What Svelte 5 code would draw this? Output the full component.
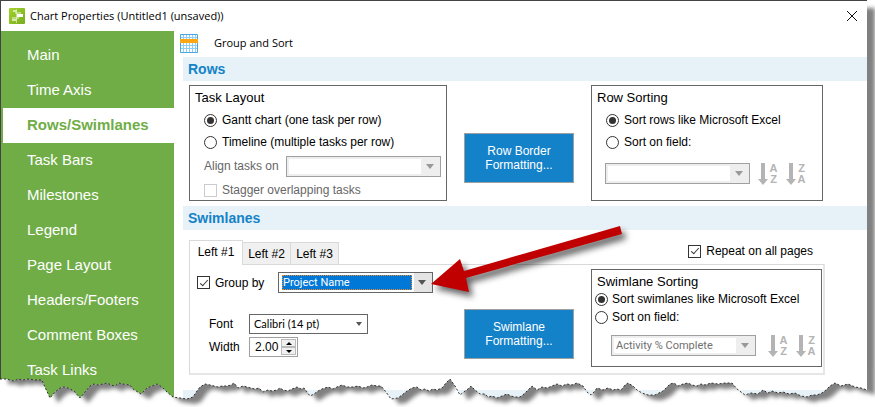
<script>
    const pages = ['Main', 'Time Axis', 'Rows/Swimlanes', 'Task Bars', 'Milestones', 'Legend', 'Page Layout', 'Headers/Footers', 'Comment Boxes', 'Task Links'];
    const tabs = ['Left #1', 'Left #2', 'Left #3'];

    let page = $state('Rows/Swimlanes');
    let tab = $state('Left #1');
    let taskLayout = $state('gantt');
    let rowSort = $state('excel');
    let laneSort = $state('excel');
    let groupBy = $state(true);
    let repeat = $state(true);
    let width = $state('2.00');

    // x,y points of the torn bottom edge
    const tear = [
        [0, 10], [7, 10], [10, 11], [14, 12], [18, 10], [23, 11], [28, 10], [35, 11], [42, 11], [44, 16], [50, 29], [55, 23], [60, 19], [64, 18],
        [68, 19], [74, 22], [80, 29], [85, 23], [90, 17], [94, 15], [98, 16], [103, 15], [107, 14], [111, 16], [115, 17], [119, 14], [122, 15], [130, 16],
        [133, 20], [141, 25], [147, 19], [152, 17], [157, 15], [162, 18], [167, 23], [173, 28], [180, 29], [187, 30], [193, 28], [197, 22], [200, 18],
        [205, 15], [210, 16], [214, 17], [218, 18], [222, 17], [227, 17], [231, 16], [234, 14], [238, 19], [243, 17], [247, 18], [251, 19], [255, 20],
        [259, 19], [263, 23], [268, 21], [272, 22], [277, 21], [280, 19], [283, 21], [288, 22], [292, 20], [297, 18], [301, 20], [304, 19], [307, 23],
        [310, 27], [314, 25], [318, 22], [322, 20], [328, 18], [333, 20], [337, 18], [342, 16], [347, 18], [353, 18], [358, 17], [363, 19], [367, 18],
        [372, 16], [377, 17], [381, 17], [386, 23], [391, 30], [398, 29], [402, 26], [407, 22], [412, 19], [417, 18], [421, 21], [425, 20], [429, 22],
        [433, 20], [437, 21], [442, 19], [446, 14], [450, 10], [455, 17], [460, 26], [465, 22], [468, 20], [471, 17], [475, 21], [480, 25], [485, 25],
        [488, 28], [492, 27], [497, 29], [502, 27], [507, 25], [511, 27], [515, 28], [520, 28], [524, 25], [527, 22], [532, 17], [537, 21], [542, 18],
        [547, 19], [552, 17], [557, 15], [562, 17], [567, 15], [572, 16], [577, 14], [583, 17], [587, 23], [591, 26], [594, 23], [597, 19], [603, 21],
        [608, 19], [613, 21], [617, 20], [621, 21], [625, 16], [628, 14], [633, 17], [637, 21], [642, 24], [648, 26], [655, 26], [659, 24], [663, 22],
        [667, 18], [670, 15], [674, 14], [678, 17], [683, 15], [688, 14], [692, 16], [697, 17], [701, 15], [705, 16], [711, 14], [718, 15], [725, 14],
        [732, 14], [737, 20], [741, 23], [745, 26], [751, 24], [758, 25], [763, 21], [768, 24], [772, 22], [778, 24], [783, 23], [789, 25], [795, 24],
        [801, 27], [807, 28], [812, 26], [817, 26], [822, 24], [826, 21], [830, 17], [835, 14], [841, 17], [848, 15], [855, 18], [861, 19], [867, 21]
    ].map((p) => p.join(',')).join(' ');
</script>

{#snippet sortIcon(first, second)}
    <span class="shaft">
        <svg width="10" height="22" viewBox="0 0 10 22" aria-hidden="true"><path d="M3 0h4v16h3l-5 6-5-6h3z" fill="#b4b4b4" /></svg>
    </span>
    <span class="letters"><b>{first}</b><b>{second}</b></span>
{/snippet}

<div class="window">
    <div class="dialog">
        <header class="titlebar">
            <svg width="16" height="16" viewBox="0 0 16 16" aria-hidden="true">
                <defs>
                    <linearGradient id="leaf" x1="0" y1="0" x2="1" y2="1">
                        <stop offset="0" stop-color="#a5d22d" />
                        <stop offset="1" stop-color="#76ad1c" />
                    </linearGradient>
                </defs>
                <rect width="16" height="16" rx="1" fill="url(#leaf)" />
                <path d="M7.500 1v14" stroke="#c3df8c" />
                <path d="M4 3h4M3 12h5" stroke="#d7ebb0" stroke-width="2" />
                <path d="M6 5h6M3 10h7" stroke="#eef7da" stroke-width="1" />
                <path d="M8 7.500h6" stroke="#fff" stroke-width="3" />
            </svg>
            <span class="title">Chart Properties (Untitled1 (unsaved))</span>
            <button class="close" aria-label="Close">
                <svg width="10" height="10" viewBox="0 0 10 10"><path d="M0 0l10 10M10 0L0 10" stroke="#111" /></svg>
            </button>
        </header>

        <div class="body">
            <nav class="sidebar">
                {#each pages as name}
                    <button class="page" class:active={page === name} onclick={() => (page = name)}>{name}</button>
                {/each}
            </nav>

            <main>
                <div class="toolbar">
                    <svg width="18" height="19" viewBox="0 0 18 19" aria-hidden="true">
                        <rect width="18" height="19" fill="#fff" />
                        <path d="M3.500 0v19M6.500 0v19M9.500 0v19M12.500 0v19M15.500 0v19M0 3.500h18M0 11.500h18M0 14.500h18" stroke="#8fcdf5" />
                        <path d="M.5 .5h17v18H.5z" fill="none" stroke="#4aa5e0" />
                        <rect y="5" width="18" height="4" fill="#ffa614" />
                    </svg>
                    <span>Group and Sort</span>
                </div>

                <h2>Rows</h2>
                <section class="columns rows">
                    <fieldset class="box task-layout">
                        <h3>Task Layout</h3>
                        <label class="option"><input type="radio" name="layout" value="gantt" bind:group={taskLayout} />Gantt chart (one task per row)</label>
                        <label class="option"><input type="radio" name="layout" value="timeline" bind:group={taskLayout} />Timeline (multiple tasks per row)</label>
                        <div class="line muted">
                            <label for="align">Align tasks on</label>
                            <span class="combo disabled"><select id="align" disabled><option></option></select></span>
                        </div>
                        <label class="option muted"><input type="checkbox" disabled />Stagger overlapping tasks</label>
                    </fieldset>

                    <button class="format">Row Border<br />Formatting...</button>

                    <fieldset class="box row-sorting">
                        <h3>Row Sorting</h3>
                        <label class="option"><input type="radio" name="rowsort" value="excel" bind:group={rowSort} />Sort rows like Microsoft Excel</label>
                        <label class="option"><input type="radio" name="rowsort" value="field" bind:group={rowSort} />Sort on field:</label>
                        <div class="line sort-line">
                            <span class="combo sort disabled"><select aria-label="Row sort field" disabled><option></option></select></span>
                            <button class="az" aria-label="Sort ascending" disabled>{@render sortIcon('A', 'Z')}</button>
                            <button class="az" aria-label="Sort descending" disabled>{@render sortIcon('Z', 'A')}</button>
                        </div>
                    </fieldset>
                </section>

                <h2>Swimlanes</h2>
                <section class="swimlanes">
                    <div class="tabrow">
                        <div class="tabs" role="tablist">
                            {#each tabs as name}
                                <button class="tab" role="tab" aria-selected={tab === name} class:current={tab === name} onclick={() => (tab = name)}>{name}</button>
                            {/each}
                        </div>
                        <label class="option repeat"><input type="checkbox" bind:checked={repeat} />Repeat on all pages</label>
                    </div>

                    <div class="columns panel">
                        <div class="group">
                            <div class="line">
                                <label class="option group-label"><input type="checkbox" bind:checked={groupBy} />Group by</label>
                                <span class="combo focus"><select aria-label="Group by field"><option>Project Name</option></select></span>
                            </div>
                            <div class="line font-line">
                                <label for="font">Font</label>
                                <span class="combo plain"><select id="font"><option>Calibri (14 pt)</option></select></span>
                            </div>
                            <div class="line width-line">
                                <label for="width">Width</label>
                                <span class="spinner">
                                    <input id="width" type="text" bind:value={width} />
                                    <span class="steps">
                                        <button aria-label="Increase width" onclick={() => (width = (Number(width) + 0.25).toFixed(2))}><i class="up"></i></button>
                                        <button aria-label="Decrease width" onclick={() => (width = (Number(width) - 0.25).toFixed(2))}><i class="down"></i></button>
                                    </span>
                                </span>
                            </div>
                        </div>

                        <button class="format">Swimlane<br />Formatting...</button>

                        <fieldset class="box lane-sorting">
                            <h3>Swimlane Sorting</h3>
                            <label class="option"><input type="radio" name="lanesort" value="excel" bind:group={laneSort} />Sort swimlanes like Microsoft Excel</label>
                            <label class="option"><input type="radio" name="lanesort" value="field" bind:group={laneSort} />Sort on field:</label>
                            <div class="line sort-line">
                                <span class="combo sort disabled"><select aria-label="Swimlane sort field" disabled><option>Activity % Complete</option></select></span>
                                <button class="az" aria-label="Sort ascending" disabled>{@render sortIcon('A', 'Z')}</button>
                                <button class="az" aria-label="Sort descending" disabled>{@render sortIcon('Z', 'A')}</button>
                            </div>
                        </fieldset>
                    </div>
                </section>
                <div class="next-band"></div>
            </main>
        </div>
    </div>

    <svg class="pointer" width="220" height="90" viewBox="0 0 220 90" aria-hidden="true">
        <path d="M6 69L35 44l4 12L195 11l2 8L41 63l3 14z" fill="#c00000" />
    </svg>

    <svg class="torn" viewBox="0 0 875 40" preserveAspectRatio="none" aria-hidden="true">
        <defs>
            <filter id="soft" x="-5%" y="-50%" width="110%" height="200%"><feGaussianBlur stdDeviation="2" /></filter>
            <clipPath id="below"><polygon points="0,40 {tear} 867,0 875,0 875,40" /></clipPath>
        </defs>
        <polygon points="0,40 {tear} 867,40" fill="#fff" />
        <g clip-path="url(#below)">
            <rect x="867" width="8" height="40" fill="#fff" />
            <polygon points="0,-30 {tear} 867,-30" transform="translate(8 5)" fill="#808080" filter="url(#soft)" />
        </g>
        <polyline points={tear} fill="none" stroke="#333" stroke-dasharray="2 2" />
    </svg>
</div>

<style>
    :global(body) { margin: 0; background: #fff; }

    .window {
        position: relative;
        overflow: hidden;
        padding: 0 8px 7px 0;
        font: 12px/14px "Liberation Sans", Arial, sans-serif;
        color: #000;
    }

    .dialog {
        border-top: 1px solid #444;
        border-left: 1px solid #444;
        background: #fff;
        box-shadow: 8px 8px 4px #808080;
    }

    button, select, input { font: inherit; color: inherit; margin: 0; }
    button { padding: 0; border: 0; background: none; }

    .titlebar {
        display: flex;
        align-items: center;
        height: 30px;
        padding: 0 9px 0 8px;
    }

    .title {
        flex: 1;
        margin-left: 5px;
        font: 11px/16px "Open Sans", "Noto Sans", sans-serif;
    }

    .close { display: flex; padding: 1px; }

    .body { display: flex; }

    .sidebar {
        display: flex;
        flex-direction: column;
        flex: 0 0 173px;
        padding: 7px 0 12px;
        box-sizing: border-box;
        background: #70ad47;
    }

    .page {
        height: 35px;
        padding: 0 0 2px 26px;
        text-align: left;
        font-size: 15px;
        color: #fff;
    }

    .page.active { margin-left: 2px; padding-left: 24px; background: #fff; color: #70ad47; font-weight: bold; }

    main { flex: 1; min-width: 0; padding-left: 6px; }

    .toolbar {
        display: flex;
        align-items: center;
        height: 26px;
        padding-bottom: 2px;
        box-sizing: border-box;
        gap: 16px;
    }

    .toolbar span { font: 11px/16px "Open Sans", "Noto Sans", sans-serif; }

    h2 {
        margin: 0 0 0 3px;
        padding-left: 5px;
        font-size: 14px;
        line-height: 24px;
        color: #1482c8;
        background: #e6f2f7;
    }

    h3 { margin: 0; font-size: 13px; font-weight: normal; line-height: 16px; }

    .columns {
        display: grid;
        grid-template-columns: 258px 110px 232px;
        column-gap: 17px;
        align-items: start;
    }

    .rows { padding: 4px 0 5px 9px; }

    .box {
        box-sizing: border-box;
        margin: 0;
        border: 1px solid #666;
        padding: 4px 5px;
        min-width: 0;
    }

    .rows .box { height: 116px; }
    .rows .option { margin: 0 0 0 9px; height: 22px; }
    .rows h3 { margin-bottom: 3px; }
    .rows .format { margin-top: 48px; }

    .option { display: flex; align-items: center; gap: 5px; white-space: nowrap; }
    .line { display: flex; align-items: center; }
    .muted { color: #666; }
    .task-layout .line { height: 26px; margin-left: 9px; justify-content: space-between; white-space: nowrap; }

    input[type="radio"], input[type="checkbox"] {
        appearance: none;
        display: grid;
        place-items: center;
        width: 13px;
        height: 13px;
        border: 1px solid #333;
        background: #fff;
    }

    input[type="radio"] { border-radius: 50%; }
    input[type="radio"]:checked::before {
        content: "";
        width: 7px;
        height: 7px;
        border-radius: 50%;
        background: #333;
    }

    input[type="checkbox"]:checked::before {
        content: "";
        width: 3px;
        height: 7px;
        margin-bottom: 2px;
        border: solid #333;
        border-width: 0 1px 1px 0;
        transform: rotate(42deg);
    }

    input[type="checkbox"]:disabled { border-color: #ccc; }

    .format {
        box-sizing: border-box;
        height: 50px;
        border: 1px solid #a0a0a0;
        background: #1482c8;
        color: #fff;
    }

    .combo { position: relative; display: block; flex: none; width: 155px; height: 21px; }

    .combo select {
        appearance: none;
        box-sizing: border-box;
        width: 100%;
        height: 100%;
        border: 1px solid #666;
        border-radius: 0;
        padding: 2px 18px 2px 4px;
        background: linear-gradient(to left, #e4e4e4 18px, #fff 18px);
        font: 11px/15px Roboto, sans-serif;
        opacity: 1;
    }

    .combo::after {
        content: "";
        position: absolute;
        right: 7px;
        top: 8px;
        border: 4px solid transparent;
        border-top: 5px solid #555;
        border-bottom: 0;
        pointer-events: none;
    }

    .combo.disabled select {
        border-color: #a0a0a0;
        color: #707070;
        background: linear-gradient(#fff, #fff) 2px 2px / calc(100% - 21px) calc(100% - 4px) no-repeat #eee;
    }

    .combo.disabled::after { border-top-color: #999; }
    .combo.sort { width: 145px; }

    .combo.focus select {
        color: #fff;
        background:
            linear-gradient(#0078d7, #0078d7) 3px 2px / calc(100% - 23px) 15px no-repeat,
            linear-gradient(to left, #e4e4e4 18px, #fff 18px);
    }

    .combo.focus::before {
        content: "";
        position: absolute;
        inset: 3px 21px 3px 4px;
        border: 1px dotted #f08a28;
        z-index: 1;
        pointer-events: none;
    }

    .combo.plain { width: 119px; height: 20px; }
    .combo.plain select { background: #fff; font: 11px/14px Lato, sans-serif; }
    .combo.plain::after { border-width: 4px 3px 0; right: 6px; }

    .row-sorting .line { margin: 9px 0 0 8px; }
    .az { display: flex; align-items: center; gap: 1px; height: 23px; margin-left: 8px; }
    .az svg { display: block; }
    .letters { display: flex; flex-direction: column; width: 9px; font-size: 11px; line-height: 11px; color: #b4b4b4; }

    .swimlanes { padding: 10px 0 15px 9px; }

    .tabrow {
        display: flex;
        align-items: flex-end;
        justify-content: space-between;
        max-width: 634px;
    }

    .tabs { display: flex; align-items: flex-end; }

    .tab {
        box-sizing: border-box;
        width: 48px;
        height: 22px;
        border: 1px solid #d9d9d9;
        border-width: 1px 1px 0 0;
        background: #f0f0f0;
    }

    .tab.current {
        position: relative;
        width: 54px;
        height: 25px;
        border-left-width: 1px;
        margin-bottom: -1px;
        padding-bottom: 2px;
        background: #fff;
    }

    .repeat { padding: 0 10px 6px 0; }

    .panel {
        box-sizing: border-box;
        max-width: 636px;
        grid-template-columns: 257px 110px 231px;
        border: 1px solid #d9d9d9;
        border-right: 2px solid #e6e6e6;
        border-bottom: 2px solid #e6e6e6;
        padding: 4px 0 6px;
    }

    .group { padding: 3px 0 0 7px; }
    .group-label { width: 81px; }
    .font-line { margin-top: 21px; padding-left: 12px; }
    .font-line label, .width-line label { width: 40px; }
    .width-line { margin-top: 3px; padding-left: 12px; }
    .panel .format { margin-top: 40px; }

    .spinner {
        display: flex;
        box-sizing: border-box;
        width: 49px;
        height: 20px;
        border: 1px solid #a0a0a0;
        padding: 1px;
    }

    .spinner input {
        flex: 1;
        min-width: 0;
        border: 0;
        padding: 0 0 0 4px;
    }

    .steps { display: flex; flex-direction: column; width: 15px; }
    .steps button {
        flex: 1;
        display: grid;
        place-items: center;
        border: 1px solid #bbb;
        background: #f0f0f0;
    }

    .steps i { border: 3px solid transparent; }
    .steps .up { border-top: 0; border-bottom-color: #000; }
    .steps .down { border-bottom: 0; border-top-color: #000; }

    .lane-sorting { height: 98px; padding: 4px 3px; }
    .lane-sorting h3 { padding-left: 2px; }
    .lane-sorting .option { height: 18px; gap: 4px; }
    .lane-sorting .sort-line { margin: 8px 0 0 16px; }
    .lane-sorting .az:nth-of-type(1) { margin-left: 12px; }

    .next-band { height: 12px; margin-left: 3px; background: #e6f2f7; }

    .pointer {
        position: absolute;
        left: 425px;
        top: 215px;
        filter: drop-shadow(4px 5px 3px rgba(0, 0, 0, 0.6));
        pointer-events: none;
    }

    .torn {
        position: absolute;
        left: 0;
        bottom: 0;
        width: 100%;
        height: 40px;
        pointer-events: none;
    }
</style>
